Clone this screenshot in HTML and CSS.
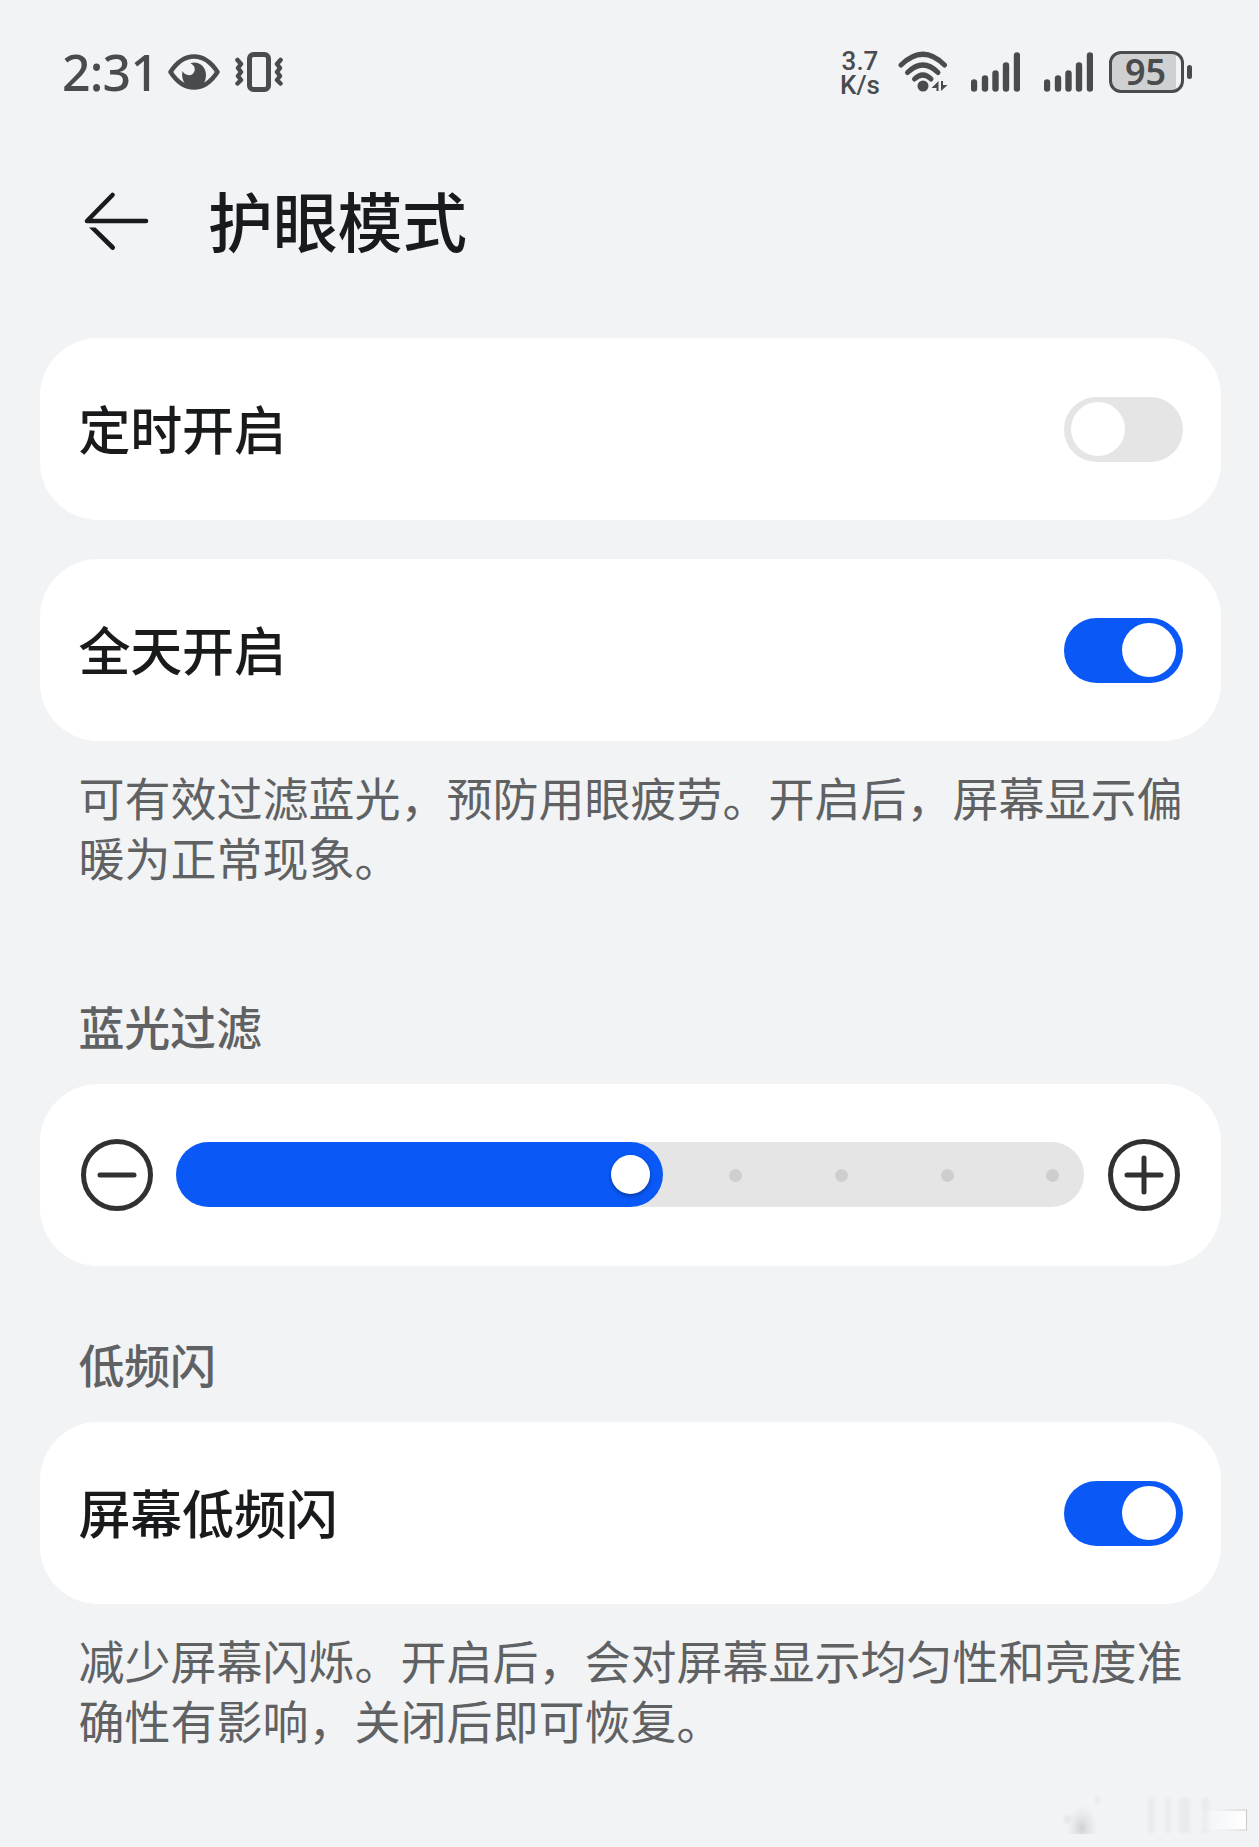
FILE: index.html
```html
<!DOCTYPE html>
<html lang="zh-CN">
<head>
    <meta charset="UTF-8">
    <meta name="viewport" content="width=device-width, initial-scale=1.0">
    <title>护眼模式</title>
    <link rel="stylesheet" href="styles.css">
</head>
<body>
    <!-- Status bar -->
    <div class="status-bar">
        <div class="status-left">
            <span class="clock">2:31</span>
            <svg class="icon-eye" width="52" height="36" viewBox="0 0 52 36">
                <path d="M2.500 18C9 8 17 2.500 26 2.500S43 8 49.500 18C43 28 35 33.500 26 33.500S9 28 2.500 18Z" fill="none" stroke="#4a4b4d" stroke-width="4.500" stroke-linejoin="round"/>
                <path d="M22.500 9.200C30 6.500 38 12 38 21C38 29 33 34 26 34C18 34 12.500 26 14.500 17C16.500 22 25 23 26.500 17C27.500 13 25.500 11 22.500 9.200Z" fill="#4a4b4d"/>
            </svg>
            <svg class="icon-vibrate" width="48" height="40" viewBox="0 0 48 40">
                <rect x="14.500" y="2.500" width="19" height="35" rx="4" fill="none" stroke="#4a4b4d" stroke-width="5"/>
                <path d="M2.500 8L6 12L3 16L6 20L3 24L6 28L2.500 31.500M45.500 8L42 12L45 16L42 20L45 24L42 28L45.500 31.500" fill="none" stroke="#4a4b4d" stroke-width="4.500" stroke-linecap="round" stroke-linejoin="round"/>
            </svg>
        </div>
        <div class="status-right">
            <div class="net-speed"><span>3.7</span><span>K/s</span></div>
            <svg class="icon-wifi" width="51" height="42" viewBox="0 0 51 42">
                <g fill="none" stroke="#4a4b4d" stroke-width="5" stroke-linecap="round">
                    <path d="M3 14Q25 -7.500 46.500 14"/>
                    <path d="M9.500 21.500Q25 6.500 40 21.500"/>
                    <path d="M16.500 28Q25 20 33 28"/>
                </g>
                <circle cx="25" cy="35" r="5.500" fill="#4a4b4d"/>
                <path d="M40.500 30V40H38.500V37H33.500ZM43 30V40L49.500 34H45V30Z" fill="#4a4b4d"/>
            </svg>
            <svg class="icon-signal" width="49" height="40" viewBox="0 0 49 40">
                <path d="M3 30.500V36.500M14 26.500V36.500M24.500 21.500V36.500M35 13.500V36.500M46 3.500V36.500" stroke="#4a4b4d" stroke-width="6.400" stroke-linecap="round"/>
            </svg>
            <svg class="icon-signal" width="49" height="40" viewBox="0 0 49 40">
                <path d="M3 30.500V36.500M14 26.500V36.500M24.500 21.500V36.500M35 13.500V36.500M46 3.500V36.500" stroke="#4a4b4d" stroke-width="6.400" stroke-linecap="round"/>
            </svg>
            <div class="battery"><span class="battery-level">95</span></div>
            <div class="battery-cap"></div>
        </div>
    </div>

    <div class="header">
        <svg class="icon-back" width="66" height="60" viewBox="0 0 66 60">
            <path d="M62 30H3L28.500 4" fill="none" stroke="#191a1b" stroke-width="4.600" stroke-linecap="round" stroke-linejoin="round"/>
            <path d="M5 36.500H11.500L30.300 54.800A2.300 2.300 0 0 1 27 58.200Z" fill="#191a1b"/>
        </svg>
        <h1 class="title">护眼模式</h1>
    </div>

    <div class="content">
        <div class="card">
            <span class="card-label">定时开启</span>
            <div class="switch"><div class="knob"></div></div>
        </div>
        <div class="card card-allday">
            <span class="card-label">全天开启</span>
            <div class="switch on"><div class="knob"></div></div>
        </div>
        <p class="hint">可有效过滤蓝光，预防用眼疲劳。开启后，屏幕显示偏<br>暖为正常现象。</p>

        <h2 class="section section-filter">蓝光过滤</h2>
        <div class="card card-slider">
            <svg width="72" height="72" viewBox="0 0 72 72">
                <circle cx="36" cy="36" r="33.500" fill="none" stroke="#303132" stroke-width="5"/>
                <path d="M19 36H53" stroke="#303132" stroke-width="5" stroke-linecap="round"/>
            </svg>
            <div class="slider">
                <div class="slider-fill"><div class="slider-knob"></div></div>
                <div class="slider-dots"><i></i><i></i><i></i><i></i></div>
            </div>
            <svg width="72" height="72" viewBox="0 0 72 72">
                <circle cx="36" cy="36" r="33.500" fill="none" stroke="#303132" stroke-width="5"/>
                <path d="M19 36H53M36 19V53" stroke="#303132" stroke-width="5" stroke-linecap="round"/>
            </svg>
        </div>

        <h2 class="section section-flicker">低频闪</h2>
        <div class="card">
            <span class="card-label">屏幕低频闪</span>
            <div class="switch on"><div class="knob"></div></div>
        </div>
        <p class="hint">减少屏幕闪烁。开启后，会对屏幕显示均匀性和亮度准<br>确性有影响，关闭后即可恢复。</p>
    </div>

    <!-- Faded mark in the corner -->
    <svg class="corner-mark" width="187" height="44" viewBox="0 0 187 44">
        <defs>
            <linearGradient id="bar" x1="0" x2="1">
                <stop offset="0" stop-color="#fff" stop-opacity="0"/>
                <stop offset="1" stop-color="#fff"/>
            </linearGradient>
            <linearGradient id="edge" gradientUnits="userSpaceOnUse" x1="150" y1="0" x2="185" y2="0">
                <stop offset="0" stop-color="#d3d5d3" stop-opacity="0"/>
                <stop offset="1" stop-color="#cccecc"/>
            </linearGradient>
            <radialGradient id="smudge" cx="0.5" cy="0.85" r="0.6">
                <stop offset="0" stop-color="#cfd0d1"/>
                <stop offset="1" stop-color="#e6e7e8" stop-opacity="0"/>
            </radialGradient>
            <filter id="soft"><feGaussianBlur stdDeviation="1.500"/></filter>
        </defs>
        <rect x="6" y="0" width="28" height="40" fill="url(#smudge)"/>
        <g filter="url(#soft)">
            <path d="M2 22H9V29H2Z" fill="#e5e6e7"/>
            <path d="M33 2H38V10H33Z" fill="#eaebec"/>
            <path d="M86 3H93V39H86ZM103 4H109V39H103ZM117 4H128V39H117ZM140 4H147V39H140Z" fill="#eaebec"/>
        </g>
        <rect x="136" y="17" width="48" height="19" fill="url(#bar)"/>
        <path d="M150 16H184.500V36H150" fill="none" stroke="url(#edge)" stroke-width="1.200"/>
    </svg>
</body>
</html>
```

FILE: styles.css
```css
* {
    box-sizing: border-box;
}
body {
    position: relative;
    margin: 0;
    height: 1847px;
    overflow: hidden;
    background-color: #f1f3f5;
    color: #191a1b;
    font-family: "Noto Sans CJK SC", sans-serif;
}
svg {
    display: block;
    flex: none;
}

/* status bar */
.status-bar {
    display: flex;
    justify-content: space-between;
    height: 120px;
    padding: 0 67px 0 62px;
    color: #4a4b4d;
    font-family: "Noto Sans", sans-serif;
}
.status-left,
.status-right {
    display: flex;
    align-items: flex-start;
}
.clock {
    width: 106px;
    margin-top: 37px;
    font-size: 50px;
    font-weight: 500;
    line-height: 70px;
    letter-spacing: -0.8px;
    white-space: nowrap;
}
.icon-eye {
    margin-top: 54px;
}
.icon-vibrate {
    margin: 52px 0 0 15px;
}
.net-speed {
    display: flex;
    flex-direction: column;
    width: 44px;
    margin: 49px 16px 0 0;
    font-family: Roboto, sans-serif;
    font-size: 26px;
    font-weight: 500;
    line-height: 24px;
    text-align: center;
}
.icon-wifi {
    margin: 51px 22px 0 0;
}
.icon-signal {
    margin: 52px 24px 0 0;
}
.icon-signal + .battery {
    margin-left: -8px;
}
.battery {
    width: 75px;
    height: 42px;
    margin-top: 51px;
    border: 3px solid #4a4b4d;
    border-radius: 12px;
    background: linear-gradient(to right, #cfd0d2 64px, #f1f3f5 64px);
    text-align: center;
}
.battery-level {
    display: block;
    padding-right: 2px;
    font-size: 36px;
    font-weight: 600;
    line-height: 36px;
}
.battery-cap {
    width: 5px;
    height: 14px;
    margin: 65px 0 0 3px;
    border-radius: 3px;
    background-color: #4a4b4d;
}

.header {
    display: flex;
    align-items: center;
    height: 202px;
    padding: 0 0 0 84px;
}
.title {
    margin: 0 0 0 58px;
    padding-bottom: 5px;
    font-size: 65px;
    font-weight: 500;
    line-height: 80px;
    letter-spacing: -0.3px;
}

/* cards */
.content {
    padding: 16px 38.5px 0 39.5px;
}
.card {
    display: flex;
    align-items: center;
    justify-content: space-between;
    height: 182px;
    padding: 0 38px 0 39px;
    border-radius: 58px;
    background-color: #fff;
}
.card-allday {
    margin-top: 39px;
}
.card-label {
    padding-bottom: 3px;
    font-size: 52px;
    font-weight: 500;
    line-height: 70px;
    letter-spacing: -0.2px;
}
.switch {
    display: flex;
    align-items: center;
    width: 119px;
    height: 65px;
    padding: 0 7px;
    border-radius: 33px;
    background-color: #e5e5e5;
}
.switch.on {
    justify-content: flex-end;
    background-color: #0a59f7;
}
.knob {
    width: 54px;
    height: 54px;
    border-radius: 50%;
    background-color: #fff;
}
.hint {
    margin: 25px 0 0;
    padding-left: 39px;
    color: #606163;
    font-size: 46px;
    line-height: 60px;
    white-space: nowrap;
}
.section {
    margin: 0;
    padding-left: 39px;
    color: #606163;
    font-size: 46px;
    font-weight: 500;
    line-height: 60px;
    letter-spacing: -0.2px;
}
.section-filter {
    margin: 109px 0 29px;
}
.section-flicker {
    margin: 67px 0 29px;
}

/* slider */
.card-slider {
    padding: 0 41px 0 41.5px;
}
.slider {
    display: flex;
    width: 908px;
    height: 65px;
    margin-bottom: 1px;
    border-radius: 33px;
    background-color: #e5e5e5;
}
.slider-fill {
    display: flex;
    align-items: center;
    justify-content: flex-end;
    width: 487px;
    padding-right: 13px;
    border-radius: 33px;
    background-color: #0a59f7;
}
.slider-knob {
    width: 39px;
    height: 39px;
    border-radius: 50%;
    background-color: #fff;
    box-shadow: 0 2px 4px rgba(0, 0, 0, 0.35);
}
.slider-dots {
    display: flex;
    flex: 1;
    align-items: center;
    justify-content: space-between;
    padding: 1px 25px 0 66px;
}
.slider-dots i {
    width: 13px;
    height: 13px;
    border-radius: 50%;
    background-color: #cecece;
}

.corner-mark {
    position: absolute;
    right: 10px;
    bottom: 9px;
}
```
